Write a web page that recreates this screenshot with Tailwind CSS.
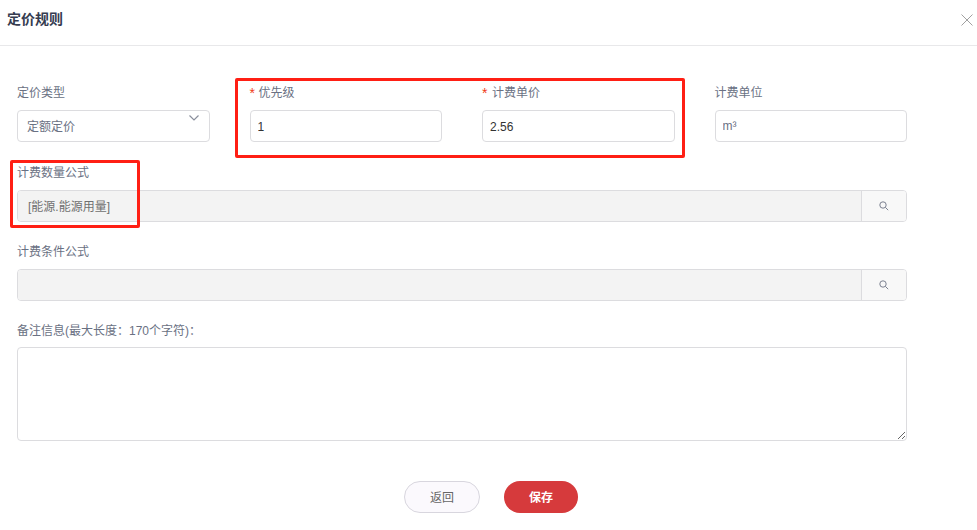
<!DOCTYPE html>
<html lang="zh-CN">
  <head>
    <meta charset="utf-8" />
    <meta name="viewport" content="width=device-width, initial-scale=1.0" />
    <title>定价规则</title>
    <script src="https://cdn.jsdelivr.net/npm/@tailwindcss/browser@4"></script>
  </head>
  <body class="bg-white font-['Liberation_Sans','Noto_Sans_CJK_SC',sans-serif] text-[12px] text-[#6a7183]">
    <div class="relative w-[977px] h-[530px] overflow-hidden">
      <header class="flex items-center justify-between h-[46px] pl-[7px] pr-[4px] pb-[6px] border-b border-[#e8e8ea]">
        <h2 class="text-[14px] font-bold text-[#353c50]">定价规则</h2>
        <svg class="w-[12px] h-[12px]" viewBox="0 0 12 12" fill="none" stroke="#a0a0a0" stroke-width="1">
          <path d="M0.5 0.5 11.5 11.5M11.5 0.5 0.5 11.5" />
        </svg>
      </header>

      <form class="w-[890px] ml-[17px]">
        <div class="grid grid-cols-4 gap-x-[40px] pt-[37px]">
          <div>
            <label class="flex items-center h-[18px] pt-[2px] mb-[9px]">定价类型</label>
            <div class="relative flex items-center h-[32px] pl-[9px] pt-[2px] border border-[#dcdcdf] rounded-[4px]">
              定额定价
              <svg class="absolute right-[10px] top-[4px] w-[10px] h-[6px]" viewBox="0 0 10 6" fill="none" stroke="#8a8f9c" stroke-width="1.2">
                <path d="M0.5 0.5 5 5 9.5 0.5" />
              </svg>
            </div>
          </div>
          <div>
            <label class="flex items-center h-[18px] pt-[2px] mb-[9px]"><span class="w-[9px] text-[14px] text-[#f03a17]">*</span>优先级</label>
            <input class="block w-full h-[32px] px-[7px] pt-[2px] border border-[#dcdcdf] rounded-[4px] text-[#333]" value="1" />
          </div>
          <div>
            <label class="flex items-center h-[18px] pt-[2px] mb-[9px]"><span class="w-[10px] text-[14px] text-[#f03a17]">*</span>计费单价</label>
            <input class="block w-full h-[32px] px-[7px] pt-[2px] border border-[#dcdcdf] rounded-[4px] text-[#333]" value="2.56" />
          </div>
          <div>
            <label class="flex items-center h-[18px] pt-[2px] mb-[9px]">计费单位</label>
            <input class="block w-full h-[32px] px-[7px] border border-[#dcdcdf] rounded-[4px] text-[#6a7183]" value="m³" />
          </div>
        </div>

        <label class="flex items-center h-[18px] pt-[2px] mt-[21px] mb-[9px]">计费数量公式</label>
        <div class="flex h-[32px] border border-[#dcdcdf] rounded-[4px] overflow-hidden">
          <div class="flex flex-1 items-center pl-[10px] pt-[2px] bg-[#f3f3f3] text-[#707070]">[能源.能源用量]</div>
          <button type="button" class="flex items-center justify-center w-[45px] border-l border-[#dcdcdf] bg-[#f8f8f8]">
            <svg class="w-[10px] h-[10px]" viewBox="0 0 10 10" fill="none" stroke="#7b8190" stroke-width="1">
              <circle cx="4" cy="4" r="3.2" />
              <path d="M6.4 6.4 9.2 9.2" />
            </svg>
          </button>
        </div>

        <label class="flex items-center h-[18px] pt-[2px] mt-[20px] mb-[9px]">计费条件公式</label>
        <div class="flex h-[32px] border border-[#dcdcdf] rounded-[4px] overflow-hidden">
          <div class="flex-1 bg-[#f3f3f3]"></div>
          <button type="button" class="flex items-center justify-center w-[45px] border-l border-[#dcdcdf] bg-[#f8f8f8]">
            <svg class="w-[10px] h-[10px]" viewBox="0 0 10 10" fill="none" stroke="#7b8190" stroke-width="1">
              <circle cx="4" cy="4" r="3.2" />
              <path d="M6.4 6.4 9.2 9.2" />
            </svg>
          </button>
        </div>

        <label class="flex items-center h-[18px] pt-[2px] mt-[20px] mb-[8px]">备注信息(最大长度：170个字符)：</label>
        <textarea class="block w-full h-[94px] border border-[#dcdcdf] rounded-[4px]"></textarea>

        <div class="flex justify-center gap-[24px] mt-[40px] pl-[58px]">
          <button type="button" class="w-[76px] h-[32px] pt-[2px] rounded-full border border-[#d8d6de] bg-[#fbf9fd] text-[#666]">返回</button>
          <button type="button" class="w-[74px] h-[32px] pt-[2px] rounded-full bg-[#d63a3c] text-white font-bold">保存</button>
        </div>
      </form>

      <div class="absolute left-[235px] top-[78px] w-[450px] h-[80px] border-[3px] border-[#ff1f14] rounded-[2px]"></div>
      <div class="absolute left-[10px] top-[160px] w-[130px] h-[68px] border-[3px] border-[#ff1f14] rounded-[2px]"></div>
    </div>
  </body>
</html>
